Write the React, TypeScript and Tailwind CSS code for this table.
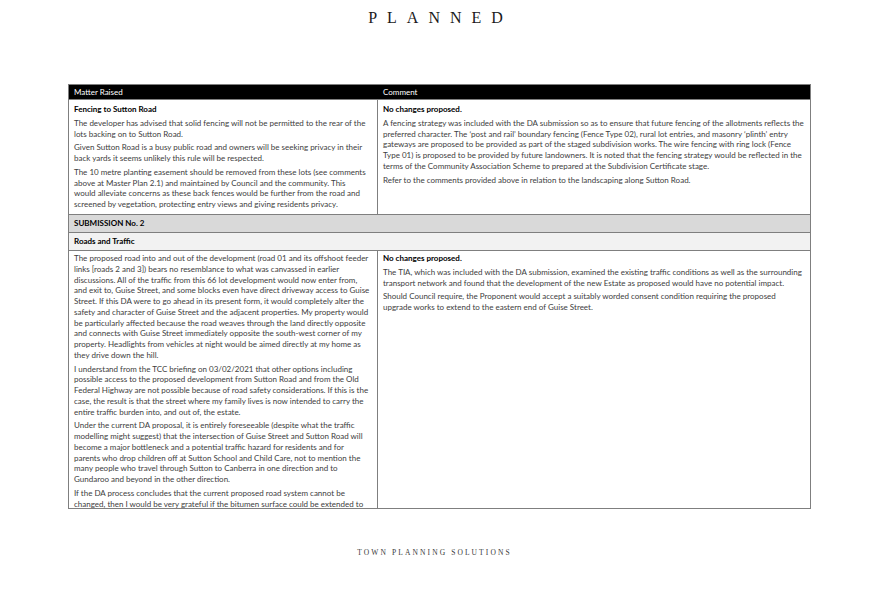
import React from 'react';

const fencingLeft = [
  [
    'The developer has advised that solid fencing will not be permitted to the rear of the',
    'lots backing on to Sutton Road.',
  ],
  [
    'Given Sutton Road is a busy public road and owners will be seeking privacy in their',
    'back yards it seems unlikely this rule will be respected.',
  ],
  [
    'The 10 metre planting easement should be removed from these lots (see comments',
    'above at Master Plan 2.1) and maintained by Council and the community. This',
    'would alleviate concerns as these back fences would be further from the road and',
    'screened by vegetation, protecting entry views and giving residents privacy.',
  ],
];

const fencingRight = [
  [
    'A fencing strategy was included with the DA submission so as to ensure that future fencing of the allotments reflects the',
    'preferred character. The \u2018post and rail\u2019 boundary fencing (Fence Type 02), rural lot entries, and masonry \u2018plinth\u2019 entry',
    'gateways are proposed to be provided as part of the staged subdivision works. The wire fencing with ring lock (Fence',
    'Type 01) is proposed to be provided by future landowners. It is noted that the fencing strategy would be reflected in the',
    'terms of the Community Association Scheme to prepared at the Subdivision Certificate stage.',
  ],
  ['Refer to the comments provided above in relation to the landscaping along Sutton Road.'],
];

const roadsLeft = [
  [
    'The proposed road into and out of the development (road 01 and its offshoot feeder',
    'links [roads 2 and 3]) bears no resemblance to what was canvassed in earlier',
    'discussions. All of the traffic from this 66 lot development would now enter from,',
    'and exit to, Guise Street, and some blocks even have direct driveway access to Guise',
    'Street. If this DA were to go ahead in its present form, it would completely alter the',
    'safety and character of Guise Street and the adjacent properties. My property would',
    'be particularly affected because the road weaves through the land directly opposite',
    'and connects with Guise Street immediately opposite the south-west corner of my',
    'property. Headlights from vehicles at night would be aimed directly at my home as',
    'they drive down the hill.',
  ],
  [
    'I understand from the TCC briefing on 03/02/2021 that other options including',
    'possible access to the proposed development from Sutton Road and from the Old',
    'Federal Highway are not possible because of road safety considerations. If this is the',
    'case, the result is that the street where my family lives is now intended to carry the',
    'entire traffic burden into, and out of, the estate.',
  ],
  [
    'Under the current DA proposal, it is entirely foreseeable (despite what the traffic',
    'modelling might suggest) that the intersection of Guise Street and Sutton Road will',
    'become a major bottleneck and a potential traffic hazard for residents and for',
    'parents who drop children off at Sutton School and Child Care, not to mention the',
    'many people who travel through Sutton to Canberra in one direction and to',
    'Gundaroo and beyond in the other direction.',
  ],
  [
    'If the DA process concludes that the current proposed road system cannot be',
    'changed, then I would be very grateful if the bitumen surface could be extended to',
  ],
];

const roadsRight = [
  [
    'The TIA, which was included with the DA submission, examined the existing traffic conditions as well as the surrounding',
    'transport network and found that the development of the new Estate as proposed would have no potential impact.',
  ],
  [
    'Should Council require, the Proponent would accept a suitably worded consent condition requiring the proposed',
    'upgrade works to extend to the eastern end of Guise Street.',
  ],
];

function Paras({ items }: { items: string[][] }) {
  return (
    <div className="flex flex-col gap-[3px] text-[#404040]">
      {items.map((lines, i) => (
        <p key={i}>
          {lines.map((l, j) => (
            <span key={j} className="block whitespace-nowrap">
              {l}
            </span>
          ))}
        </p>
      ))}
    </div>
  );
}

function Heading({ children }: { children: React.ReactNode }) {
  return <p className="mb-[3px] font-bold text-black">{children}</p>;
}

export default function App() {
  const title = 'PLANNED'.split('');

  return (
    <div className="w-[869px] h-[600px] bg-white flex flex-col overflow-hidden">
      <div className="pt-[9px] pl-[2px] flex justify-center gap-[10px] font-['Liberation_Serif',serif] text-[16px] leading-[18px] text-[#1a1a1a]">
        {title.map((c, i) => (
          <span key={i}>{c}</span>
        ))}
      </div>

      <div className="mt-[57px] ml-[68px] w-[743px] border border-[#7f7f7f] font-['Lato',sans-serif] text-[8px] leading-[10.75px]">
        <div className="grid grid-cols-[309px_1fr] h-[14px] bg-black text-white">
          <div className="px-[5px] flex items-center">Matter Raised</div>
          <div className="px-[5px] flex items-center">Comment</div>
        </div>

        <div className="grid grid-cols-[309px_1fr] h-[115px] border-t border-[#7f7f7f]">
          <div className="px-[5px] pt-[4px] border-r border-[#7f7f7f]">
            <Heading>Fencing to Sutton Road</Heading>
            <Paras items={fencingLeft} />
          </div>
          <div className="px-[5px] pt-[4px]">
            <Heading>No changes proposed.</Heading>
            <Paras items={fencingRight} />
          </div>
        </div>

        <div className="h-[18px] px-[5px] flex items-center bg-[#d9d9d9] border-t border-[#7f7f7f] font-bold text-black">
          SUBMISSION No. 2
        </div>
        <div className="h-[18px] px-[5px] flex items-center bg-[#f2f2f2] border-t border-[#7f7f7f] font-bold text-black">
          Roads and Traffic
        </div>

        <div className="grid grid-cols-[309px_1fr] h-[258px] border-t border-[#7f7f7f] overflow-hidden">
          <div className="px-[5px] pt-[2px] border-r border-[#7f7f7f]">
            <Paras items={roadsLeft} />
          </div>
          <div className="px-[5px] pt-[2px]">
            <Heading>No changes proposed.</Heading>
            <Paras items={roadsRight} />
          </div>
        </div>
      </div>

      <div className="mt-[39px] flex justify-center font-['Liberation_Serif',serif] text-[7.5px] leading-[10px] tracking-[2.1px] text-[#3a3a3a]">
        TOWN PLANNING SOLUTIONS
      </div>
    </div>
  );
}
